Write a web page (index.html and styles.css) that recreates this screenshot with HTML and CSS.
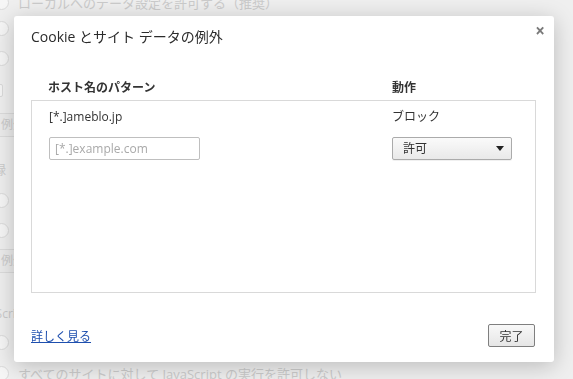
FILE: index.html
```html
<!DOCTYPE html>
<html lang="ja">
<head>
    <meta charset="UTF-8">
    <meta name="viewport" content="width=device-width, initial-scale=1.0">
    <title>Cookie とサイト データの例外</title>
    <link rel="stylesheet" href="styles.css">
</head>
<body>

    <!-- Settings page behind the dialog (faded) -->
    <div class="page">
        <div class="row r0"><span class="radio"></span><span class="label">ローカルへのデータ設定を許可する（推奨）</span></div>
        <div class="row r1"><span class="radio"></span></div>
        <div class="row r2"><span class="radio"></span></div>
        <div class="row r3"><span class="check"></span></div>
        <div class="row r4"><span class="bgbutton">例外の管理...</span></div>
        <div class="row r5"><span class="heading">記録</span></div>
        <div class="row r6"><span class="radio"></span></div>
        <div class="row r7"><span class="radio"></span></div>
        <div class="row r8"><span class="bgbutton">例外の管理...</span></div>
        <div class="row r9"><span class="heading js">JavaScript</span></div>
        <div class="row r10"><span class="radio"></span></div>
        <div class="row r11"><span class="radio"></span><span class="label">すべてのサイトに対して JavaScript の実行を許可しない</span></div>
    </div>

    <!-- Exceptions dialog -->
    <div class="overlay">
        <div class="dialog">
            <span class="close">&times;</span>
            <h1 class="title">Cookie とサイト データの例外</h1>

            <div class="content">
                <div class="list-head">
                    <span>ホスト名のパターン</span>
                    <span>動作</span>
                </div>
                <div class="list">
                    <div class="list-row">
                        <span class="pattern">[*.]ameblo.jp</span>
                        <span class="action">ブロック</span>
                    </div>
                    <div class="list-row edit-row">
                        <input class="pattern-input" type="text" placeholder="[*.]example.com">
                        <div class="select">
                            <span>許可</span>
                            <span class="arrow"></span>
                        </div>
                    </div>
                </div>
            </div>

            <div class="footer">
                <a class="more" href="#">詳しく見る</a>
                <button class="done">完了</button>
            </div>
        </div>
    </div>

</body>
</html>
```

FILE: styles.css
```css
body {
    margin: 0;
    background-color: #efefef;
    font-family: "Open Sans", "Noto Sans CJK JP", sans-serif;
    font-size: 12px;
    color: #333;
    overflow: hidden;
}

/* Faded settings page */
.page {
    margin-top: -8px;
    margin-left: -6px;
    color: #cbcbcb;
    font-size: 13px;
}
.row {
    display: flex;
    align-items: center;
    height: 20px;
}
.r1 { margin-top: 6px; }
.r2 { margin-top: 10px; }
.r3 { margin-top: 12px; }
.r4 { margin-top: 13px; height: 24px; }
.r5 { margin-top: 21px; }
.r6 { margin-top: 12px; }
.r7 { margin-top: 10px; }
.r8 { margin-top: 9px; height: 24px; }
.r9 { margin-top: 30px; }
.r10 { margin-top: 9px; }
.r11 { margin-top: 11px; }

.radio {
    width: 13px;
    height: 13px;
    border: 1px solid #dadada;
    border-radius: 50%;
    background-color: #f6f6f6;
    flex-shrink: 0;
}
.check {
    width: 11px;
    height: 11px;
    margin-left: -4px;
    border: 1px solid #dadada;
    border-radius: 2px;
    background-color: #f6f6f6;
}
.label {
    margin-left: 9px;
}
.bgbutton {
    height: 22px;
    line-height: 22px;
    margin-left: -4px;
    padding: 0 10px;
    border: 1px solid #dcdcdc;
    border-radius: 2px;
    background-color: #ececec;
    font-size: 12px;
}
.heading {
    margin-left: -14px;
}
.heading.js {
    margin-left: -21px;
    font-size: 12px;
}

/* Dialog */
.overlay {
    position: fixed;
    left: 0;
    top: 0;
    width: 100%;
    height: 100%;
    padding: 16px 0 0 14px;
    box-sizing: border-box;
}
.dialog {
    position: relative;
    width: 540px;
    height: 346px;
    box-sizing: border-box;
    padding: 10px 18px 0 17px;
    background-color: #fff;
    border-radius: 3px;
    box-shadow: 0 4px 22px rgba(0, 0, 0, 0.22);
    display: flex;
    flex-direction: column;
}
.close {
    position: absolute;
    top: 5px;
    right: 9px;
    font-size: 17px;
    font-weight: bold;
    color: #7a7a7a;
    line-height: 20px;
}
.title {
    margin: 0;
    font-size: 14px;
    font-weight: normal;
    line-height: 22px;
    color: #2b2b2b;
}

.content {
    margin-top: 31px;
}
.list-head {
    display: grid;
    grid-template-columns: 344px 1fr;
    padding-left: 17px;
    height: 18px;
    line-height: 18px;
    margin-bottom: 3px;
    font-weight: bold;
    color: #333;
}
.list {
    height: 193px;
    box-sizing: border-box;
    border: 1px solid #d9d9d9;
    padding: 7px 0 0 17px;
}
.list-row {
    display: grid;
    grid-template-columns: 343px 1fr;
    align-items: center;
    line-height: 18px;
    color: #333;
}
.edit-row {
    margin-top: 11px;
}
.pattern-input {
    width: 151px;
    height: 23px;
    box-sizing: border-box;
    border: 1px solid #bfbfbf;
    border-radius: 2px;
    padding: 0 5px;
    font-family: "Open Sans", "Noto Sans CJK JP", sans-serif;
    font-size: 12px;
    outline: none;
}
.pattern-input::placeholder {
    color: #a9a9a9;
}
.select {
    width: 120px;
    height: 23px;
    box-sizing: border-box;
    border: 1px solid #ababab;
    border-radius: 2px;
    background: linear-gradient(#fafafa, #e9e9e9);
    display: flex;
    align-items: center;
    justify-content: space-between;
    padding: 0 7px 0 10px;
    box-shadow: 0 1px 0 rgba(0, 0, 0, 0.06);
}
.arrow {
    width: 0;
    height: 0;
    border-left: 4px solid transparent;
    border-right: 4px solid transparent;
    border-top: 5px solid #222;
}

.footer {
    margin-top: 31px;
    display: flex;
    justify-content: space-between;
    align-items: center;
}
.more {
    color: #1e4fae;
    text-decoration: underline;
}
.done {
    width: 47px;
    height: 23px;
    margin-right: 1px;
    border: 1px solid #7f7f7f;
    border-radius: 2px;
    background: linear-gradient(#f8f8f8, #e6e6e6);
    font-family: "Open Sans", "Noto Sans CJK JP", sans-serif;
    font-size: 12px;
    color: #333;
    padding: 0;
}
```
